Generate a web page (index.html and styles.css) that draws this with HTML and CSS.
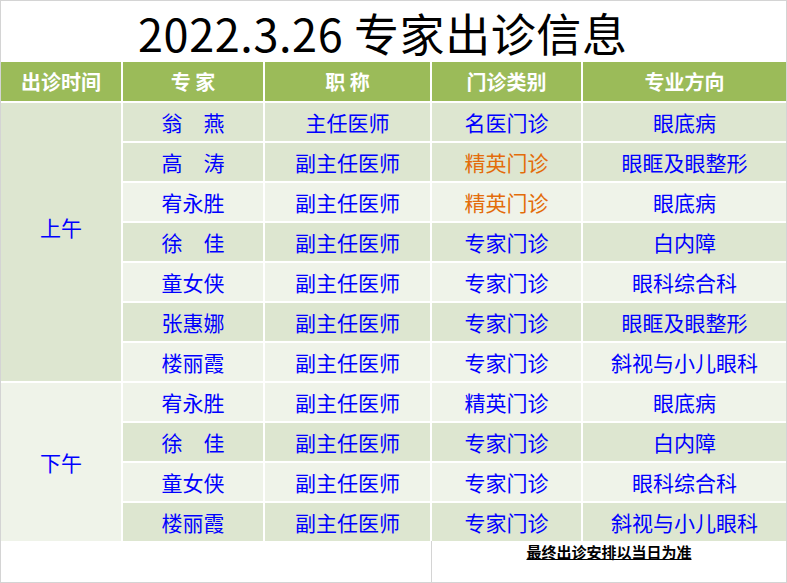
FILE: index.html
```html
<!DOCTYPE html>
<html lang="zh-CN">
<head>
<meta charset="utf-8">
<title>2022.3.26 专家出诊信息</title>
<link rel="stylesheet" href="styles.css">
</head>
<body>
<div class="sheet">
  <div class="title">2022.3.26 专家出诊信息</div>
  <div class="grid">
    <div class="hd">出诊时间</div>
    <div class="hd">专 家</div>
    <div class="hd">职 称</div>
    <div class="hd">门诊类别</div>
    <div class="hd">专业方向</div>

    <div class="c period am dk">上午</div>
    <div class="c dk">翁　燕</div><div class="c dk">主任医师</div><div class="c dk">名医门诊</div><div class="c dk">眼底病</div>
    <div class="c dk">高　涛</div><div class="c dk">副主任医师</div><div class="c dk or">精英门诊</div><div class="c dk">眼眶及眼整形</div>
    <div class="c lt">宥永胜</div><div class="c lt">副主任医师</div><div class="c lt or">精英门诊</div><div class="c lt">眼底病</div>
    <div class="c dk">徐　佳</div><div class="c dk">副主任医师</div><div class="c dk">专家门诊</div><div class="c dk">白内障</div>
    <div class="c lt">童女侠</div><div class="c lt">副主任医师</div><div class="c lt">专家门诊</div><div class="c lt">眼科综合科</div>
    <div class="c dk">张惠娜</div><div class="c dk">副主任医师</div><div class="c dk">专家门诊</div><div class="c dk">眼眶及眼整形</div>
    <div class="c lt">楼丽霞</div><div class="c lt">副主任医师</div><div class="c lt">专家门诊</div><div class="c lt">斜视与小儿眼科</div>

    <div class="c period pm lt">下午</div>
    <div class="c lt">宥永胜</div><div class="c lt">副主任医师</div><div class="c lt">精英门诊</div><div class="c lt">眼底病</div>
    <div class="c dk">徐　佳</div><div class="c dk">副主任医师</div><div class="c dk">专家门诊</div><div class="c dk">白内障</div>
    <div class="c lt">童女侠</div><div class="c lt">副主任医师</div><div class="c lt">专家门诊</div><div class="c lt">眼科综合科</div>
    <div class="c dk">楼丽霞</div><div class="c dk">副主任医师</div><div class="c dk">专家门诊</div><div class="c dk">斜视与小儿眼科</div>

    <div class="note"><span>最终出诊安排以当日为准</span></div>
  </div>
</div>
</body>
</html>
```

FILE: styles.css
```css
html, body {
  margin: 0;
  padding: 0;
  background: #ffffff;
}

.sheet {
  box-sizing: border-box;
  width: 787px;
  height: 583px;
  border: 1px solid #d4d4d4;
  background: #ffffff;
  display: flex;
  flex-direction: column;
  font-family: "Noto Sans CJK SC", "Noto Sans", sans-serif;
}

.title {
  height: 61px;
  box-sizing: border-box;
  padding-left: 137px;
  font-size: 45px;
  letter-spacing: 0.6px;
  line-height: 64px;
  color: #000000;
  white-space: nowrap;
}

.grid {
  flex: 1;
  display: grid;
  grid-template-columns: 120px 140px 165px 149px 1fr;
  grid-template-rows: 39px repeat(11, 38px) 1fr;
  column-gap: 2px;
  row-gap: 2px;
}

.hd {
  background: #9bbb59;
  color: #ffffff;
  font-weight: bold;
  font-size: 20px;
  display: flex;
  align-items: center;
  justify-content: center;
  white-space: pre;
}

.c {
  display: flex;
  align-items: center;
  justify-content: center;
  font-size: 21px;
  line-height: 36px;
  padding-bottom: 1px;
  color: #0000ff;
  white-space: nowrap;
}

.dk { background: #dde6d0; }
.lt { background: #eff3e9; }
.or { color: #e36c0a; }

.period.am {
  grid-row: span 7;
  padding-bottom: 30px;
}
.period.pm {
  grid-row: span 4;
}

.note {
  grid-column: 4 / 6;
  margin-left: -1px;
  margin-top: -2px;
  border-left: 1px solid #d4d4d4;
  display: flex;
  justify-content: center;
  align-items: flex-start;
  padding-top: 1px;
}
.note span {
  font-size: 15px;
  font-weight: bold;
  color: #000000;
  text-decoration: underline;
  line-height: 20px;
}
```
